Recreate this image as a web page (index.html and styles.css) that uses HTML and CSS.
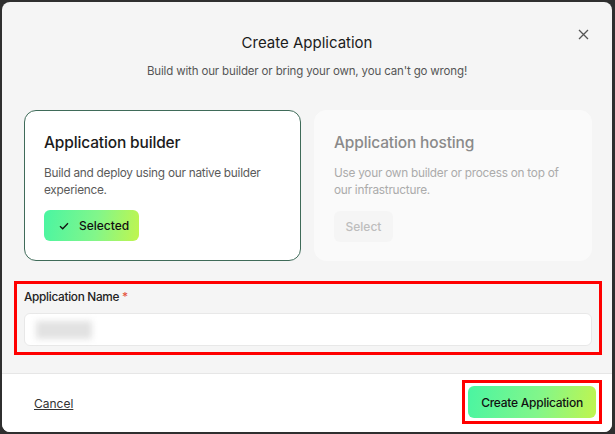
FILE: index.html
```html
<!DOCTYPE html>
<html lang="en">
<head>
  <meta charset="UTF-8">
  <meta name="viewport" content="width=device-width, initial-scale=1.0">
  <title>Create Application</title>
  <link rel="stylesheet" href="styles.css">
</head>
<body>

  <div class="dialog">
    <!-- Header -->
    <div class="dialog-header">
      <h1>Create Application</h1>
      <p>Build with our builder or bring your own, you can't go wrong!</p>
      <button class="close" aria-label="Close">
        <svg width="11" height="11" viewBox="0 0 11 11"><path d="M1 1L10 10M10 1L1 10" stroke="#555" stroke-width="1.3" fill="none"/></svg>
      </button>
    </div>

    <!-- Type choice -->
    <div class="options">
      <div class="option active">
        <h2>Application builder</h2>
        <p>Build and deploy using our native builder experience.</p>
        <button class="pill selected">
          <svg width="10" height="8" viewBox="0 0 10 8"><path d="M1 4.2L3.7 6.8L9 1.2" stroke="#111" stroke-width="1.3" fill="none"/></svg>
          Selected
        </button>
      </div>
      <div class="option muted">
        <h2>Application hosting</h2>
        <p>Use your own builder or process on top of our infrastructure.</p>
        <button class="pill ghost">Select</button>
      </div>
    </div>

    <!-- Name field -->
    <div class="field mark">
      <label>Application Name <span class="req">*</span></label>
      <div class="input"><span class="blur"></span></div>
    </div>

    <!-- Footer -->
    <div class="dialog-footer">
      <a href="#" class="cancel">Cancel</a>
      <div class="mark tight">
        <button class="primary">Create Application</button>
      </div>
    </div>
  </div>

</body>
</html>
```

FILE: styles.css
```css
body {
  margin: 0;
  padding: 2px 3px 2px 2px;
  background-color: #2f2f2f;
  font-family: Inter, 'Noto Sans', sans-serif;
  color: #1b1b1b;
}
.dialog {
  width: 610px;
  height: 430px;
  background-color: #f5f5f5;
  border-radius: 8px;
  overflow: hidden;
  display: flex;
  flex-direction: column;
}
.dialog-header {
  position: relative;
  text-align: center;
  padding-top: 31px;
}
.dialog-header h1 {
  margin: 0;
  font-size: 15px;
  line-height: 20px;
  font-weight: 400;
  color: #1b1b1b;
}
.dialog-header p {
  margin: 10px 0 0;
  font-size: 11.5px;
  line-height: 16px;
  letter-spacing: -0.15px;
  color: #555;
}
.close {
  position: absolute;
  top: 24px;
  right: 21px;
  width: 16px;
  height: 16px;
  padding: 0;
  border: none;
  background: none;
  display: flex;
  align-items: center;
  justify-content: center;
}
.options {
  display: grid;
  grid-template-columns: 277px 278px;
  gap: 13px;
  padding: 0 20px 0 22px;
  margin-top: 31px;
}
.option {
  height: 151px;
  box-sizing: border-box;
  padding: 21px 19px 0;
  border-radius: 12px;
}
.option.active {
  background-color: #fff;
  border: 1px solid #3f6b59;
}
.option.muted {
  background-color: #fafafa;
  border: 1px solid #fafafa;
}
.option h2 {
  margin: 0;
  font-size: 15.5px;
  line-height: 22px;
  font-weight: 500;
  letter-spacing: -0.15px;
}
.option p {
  margin: 11px 0 0;
  font-size: 11.8px;
  line-height: 17px;
  letter-spacing: -0.25px;
  color: #5a5a5a;
}
.muted h2 {
  color: #8a8a8a;
}
.muted p {
  color: #ababab;
}
.pill {
  margin-top: 11px;
  height: 31px;
  border: none;
  border-radius: 6px;
  font-family: inherit;
  font-size: 12px;
  font-weight: 500;
  display: flex;
  align-items: center;
  gap: 10px;
}
.pill.selected {
  width: 95px;
  padding: 0 0 0 15px;
  color: #111;
  background: linear-gradient(100deg, #4af5a2 0%, #82f68a 55%, #c0f54e 100%);
}
.pill.ghost {
  width: 59px;
  margin-top: 12px;
  justify-content: center;
  padding: 0;
  color: #bdbdbd;
  background-color: #f5f5f5;
}
.mark {
  border: 3px solid #ff0000;
}
.field {
  margin: 20px 10px 0 12px;
  padding: 5px 7px 6px;
}
.field label {
  display: block;
  font-size: 11.8px;
  line-height: 16px;
  font-weight: 500;
  letter-spacing: -0.3px;
  color: #222;
}
.req {
  color: #e5533d;
}
.input {
  margin-top: 8px;
  height: 33px;
  box-sizing: border-box;
  background-color: #fff;
  border: 1px solid #e8e8e8;
  border-radius: 6px;
  display: flex;
  align-items: center;
  padding-left: 11px;
}
.blur {
  width: 56px;
  height: 18px;
  background-color: #e2e2e2;
  filter: blur(3px);
}
.dialog-footer {
  margin-top: auto;
  height: 58px;
  background-color: #fff;
  border-top: 1px solid #e6e6e6;
  display: flex;
  align-items: center;
  justify-content: space-between;
  padding: 0 10px 0 32px;
}
.cancel {
  font-size: 12px;
  color: #333;
  text-decoration: underline;
}
.tight {
  padding: 3px;
  display: flex;
  margin-top: -2px;
}
.primary {
  width: 128px;
  height: 32px;
  border: none;
  border-radius: 6px;
  font-family: inherit;
  font-size: 12px;
  font-weight: 500;
  letter-spacing: -0.25px;
  color: #111;
  background: linear-gradient(100deg, #4af5a2 0%, #82f68a 55%, #c0f54e 100%);
}
```
